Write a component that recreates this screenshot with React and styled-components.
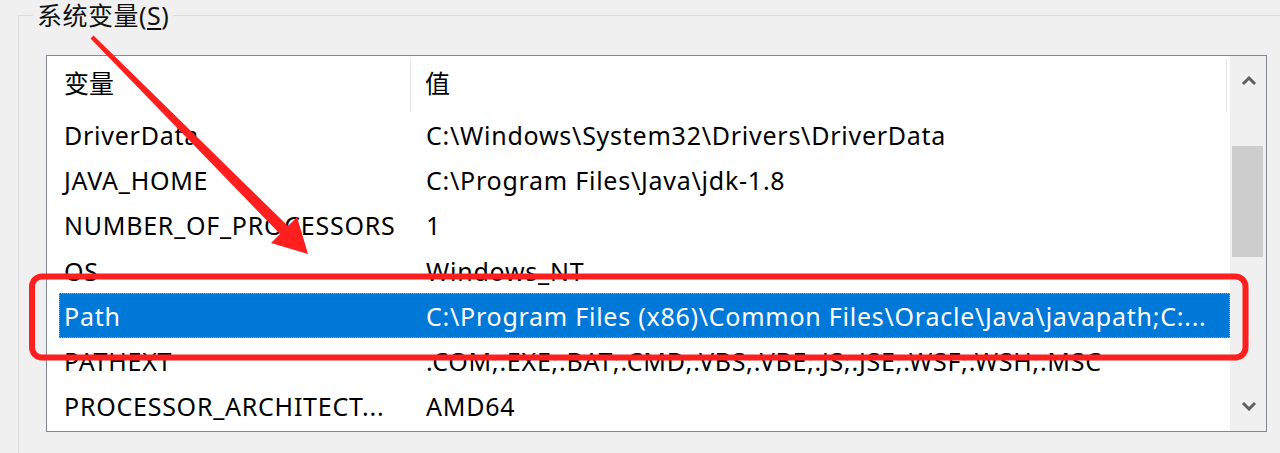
import styled, { createGlobalStyle } from 'styled-components'

const GlobalStyle = createGlobalStyle`
    html, body {
        margin: 0;
        padding: 0;
        background: #f0f0f0;
        overflow: hidden;
    }
    body {
        font-family: "Noto Sans", "Noto Sans CJK SC", sans-serif;
        color: #000;
    }
`

const Page = styled.div`
    position: relative;
    width: 1280px;
    height: 453px;
    box-sizing: border-box;
`

const GroupBox = styled.fieldset`
    margin: 0 0 0 18px;
    padding: 0;
    min-width: 0;
    height: 470px;
    border: 1px solid #dcdcdc;
    border-right: none;
    border-bottom: none;
`

const Legend = styled.legend`
    margin-left: 14px;
    padding: 0 4px;
    font-size: 25px;
    letter-spacing: 0.5px;
    line-height: 31px;
    color: #111;
    u {
        text-underline-offset: 3px;
    }
`

const ListBox = styled.div`
    display: grid;
    grid-template-columns: 1fr 36px;
    margin: 24px 0 0 27px;
    width: 1219px;
    height: 375px;
    border: 1px solid #828790;
    background: #fff;
`

const Content = styled.div`
    display: flex;
    flex-direction: column;
    min-width: 0;
`

const Header = styled.div`
    display: flex;
    height: 56px;
    font-size: 25px;
`

const HeaderCell = styled.div`
    display: flex;
    align-items: center;
    box-sizing: border-box;
    width: ${p => p.$width};
    padding-left: ${p => p.$pad};
    padding-bottom: 7px;
    border-right: 1px solid #e5e5e5;
    margin-top: 3px;
`

const Row = styled.div`
    display: flex;
    height: 45.3px;
    margin-left: 12px;
    font-size: 25px;
    letter-spacing: 0.75px;
    align-items: center;
    background: ${p => (p.$selected ? '#0078d7' : 'transparent')};
    color: ${p => (p.$selected ? '#fff' : '#000')};
    outline: ${p => (p.$selected ? '1px dotted #c8a060' : 'none')};
    outline-offset: -1px;
`

const Cell = styled.div`
    box-sizing: border-box;
    flex: ${p => (p.$grow ? '1' : `0 0 ${p.$width}`)};
    padding-left: ${p => p.$pad};
    padding-right: ${p => p.$padRight || '0'};
    white-space: nowrap;
    overflow: hidden;
    text-overflow: ellipsis;
    min-width: 0;
`

const ScrollBar = styled.div`
    display: flex;
    flex-direction: column;
    background: #f0f0f0;
`

const ScrollButton = styled.div`
    height: 50px;
    display: flex;
    align-items: center;
    justify-content: center;
    padding-left: 2px;
`

const Track = styled.div`
    flex: 1;
    padding: 40px 3px 0 2px;
`

const Thumb = styled.div`
    height: 111px;
    background: #cdcdcd;
`

const Overlay = styled.svg`
    position: absolute;
    left: 0;
    top: 0;
    pointer-events: none;
`

// texts as the list view shows them (already shortened by the control)
const rows = [
    { name: 'DriverData', value: 'C:\\Windows\\System32\\Drivers\\DriverData' },
    { name: 'JAVA_HOME', value: 'C:\\Program Files\\Java\\jdk-1.8' },
    { name: 'NUMBER_OF_PROCESSORS', value: '1' },
    { name: 'OS', value: 'Windows_NT' },
    { name: 'Path', value: 'C:\\Program Files (x86)\\Common Files\\Oracle\\Java\\javapath;C:...', selected: true },
    { name: 'PATHEXT', value: '.COM;.EXE;.BAT;.CMD;.VBS;.VBE;.JS;.JSE;.WSF;.WSH;.MSC' },
    { name: 'PROCESSOR_ARCHITECT...', value: 'AMD64' },
]

function Chevron({ up }) {
    return (
        <svg width="16" height="10" viewBox="0 0 16 10">
            <polyline
                points={up ? '2,8 8,2 14,8' : '2,2 8,8 14,2'}
                fill="none"
                stroke="#606060"
                strokeWidth="3"
            />
        </svg>
    )
}

function App() {
    return (
        <Page>
            <GlobalStyle />
            <GroupBox>
                <Legend>系统变量(<u>S</u>)</Legend>
                <ListBox>
                    <Content>
                        <Header>
                            <HeaderCell $width="364px" $pad="17px">变量</HeaderCell>
                            <HeaderCell $width="816px" $pad="14px">值</HeaderCell>
                        </Header>
                        {rows.map(r => (
                            <Row key={r.name} $selected={r.selected}>
                                <Cell $width="352px" $pad="5px" $padRight="2px">{r.name}</Cell>
                                <Cell $grow $pad="15px" $padRight="4px">{r.value}</Cell>
                            </Row>
                        ))}
                    </Content>
                    <ScrollBar>
                        <ScrollButton><Chevron up /></ScrollButton>
                        <Track><Thumb /></Track>
                        <ScrollButton><Chevron /></ScrollButton>
                    </ScrollBar>
                </ListBox>
            </GroupBox>

            {/* red annotation drawn over the dialog */}
            <Overlay width="1280" height="453" viewBox="0 0 1280 453">
                <rect x="32" y="276.5" width="1213.5" height="81" rx="10" fill="none" stroke="#ff1f1f" strokeWidth="6" />
                <polygon
                    points="90.5,38.5 280,234 271,243 308,254 297,217 288,226 93.5,35.5"
                    fill="#ff1f1f"
                />
            </Overlay>
        </Page>
    )
}

export default App
